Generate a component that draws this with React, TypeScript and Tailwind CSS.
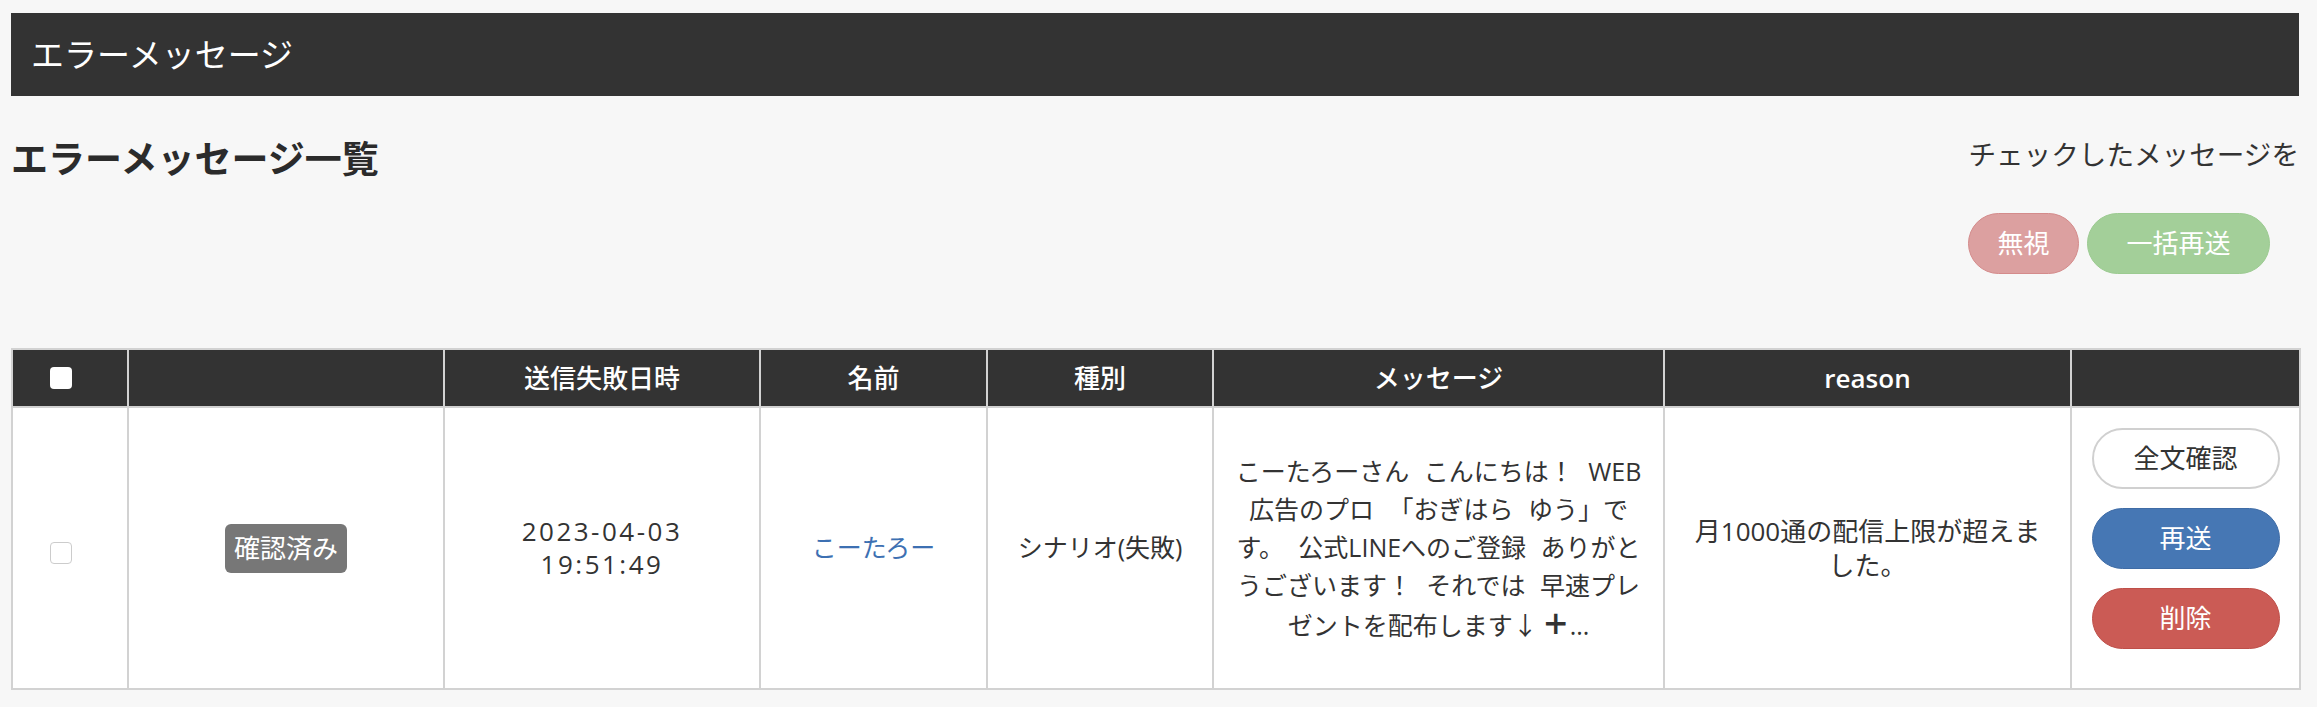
import React from "react";

export default function App() {
  return (
    <div className="min-h-screen bg-[#f7f7f7] pt-[13px] font-['Open_Sans','Noto_Sans_CJK_JP',sans-serif] text-[#333]">
      <div className="ml-[11px] w-[2288px]">
        <div className="flex h-[83px] items-center bg-[#333333] pl-[20px] text-[33px] leading-none text-white">
          エラーメッセージ
        </div>

        <div className="flex items-start justify-between pt-[39px]">
          <h1 className="mt-[2px] text-[37px] font-bold leading-[43px] text-[#2b2b2b]">
            エラーメッセージ一覧
          </h1>
          <div className="flex flex-col items-end">
            <p className="text-[27.6px] leading-[38px] text-[#333]">チェックしたメッセージを</p>
            <div className="mr-[29px] mt-[40px] flex gap-[8px]">
              <button className="flex h-[61px] w-[111px] items-center justify-center rounded-full border border-[#d48b8b] bg-[#dca0a0] text-[26px] text-white">
                無視
              </button>
              <button className="flex h-[61px] w-[183px] items-center justify-center rounded-full border border-[#9ccb91] bg-[#a3cf99] text-[26px] text-white">
                一括再送
              </button>
            </div>
          </div>
        </div>

        <table className="mt-[74px] w-[2288px] table-fixed border-collapse border-2 border-[#d2d2d2]">
          <thead>
            <tr className="h-[58px] bg-[#333333] text-white">
              <th className="w-[116px] border-2 border-[#d2d2d2] pl-[37px] text-left align-middle">
                <span className="block h-[22px] w-[22px] rounded-[4px] bg-white" />
              </th>
              <th className="w-[316px] border-2 border-[#d2d2d2]" />
              <th className="w-[316px] border-2 border-[#d2d2d2] text-[26px] font-medium">送信失敗日時</th>
              <th className="w-[227px] border-2 border-[#d2d2d2] text-[26px] font-medium">名前</th>
              <th className="w-[226px] border-2 border-[#d2d2d2] text-[26px] font-medium">種別</th>
              <th className="w-[451px] border-2 border-[#d2d2d2] text-[26px] font-medium">メッセージ</th>
              <th className="w-[407px] border-2 border-[#d2d2d2] text-[26px] font-semibold">reason</th>
              <th className="w-[229px] border-2 border-[#d2d2d2]" />
            </tr>
          </thead>
          <tbody>
            <tr className="h-[282px] bg-white">
              <td className="border-2 border-[#d2d2d2] pl-[37px] align-middle">
                <span className="mt-[9px] block h-[22px] w-[22px] rounded-[4px] border border-[#cccccc] bg-white" />
              </td>
              <td className="border-2 border-[#d2d2d2] text-center align-middle">
                <span className="inline-block rounded-[6px] bg-[#777777] px-[9px] py-[8px] text-[26px] leading-[33px] text-white">
                  確認済み
                </span>
              </td>
              <td className="border-2 border-[#d2d2d2] text-center align-middle text-[26px] leading-[33px] tracking-[2.5px]">
                <div>2023-04-03</div>
                <div>19:51:49</div>
              </td>
              <td className="border-2 border-[#d2d2d2] text-center align-middle text-[25px]">
                <a className="text-[#3d70b2]" href="#">
                  こーたろー
                </a>
              </td>
              <td className="border-2 border-[#d2d2d2] text-center align-middle text-[25px]">シナリオ(失敗)</td>
              <td className="whitespace-nowrap border-2 border-[#d2d2d2] text-center align-middle text-[25px] leading-[38px] [word-spacing:8px]">
                こーたろーさん こんにちは！ WEB
                <br />
                広告のプロ 「おぎはら ゆう」で
                <br />
                す。 公式LINEへのご登録 ありがと
                <br />
                うございます！ それでは 早速プレ
                <br />
                ゼントを配布します↓<span className="ml-[4px] font-['Noto_Sans_CJK_JP'] text-[28px] font-black">＋</span>...
              </td>
              <td className="border-2 border-[#d2d2d2] text-center align-middle text-[26px] leading-[34px]">
                月1000通の配信上限が超えま
                <br />
                した。
              </td>
              <td className="border-2 border-[#d2d2d2] align-middle">
                <div className="flex flex-col items-center">
                  <button className="mb-[19px] flex h-[61px] w-[188px] items-center justify-center rounded-full border-2 border-[#d0d0d0] bg-white text-[26px] text-[#333]">
                    全文確認
                  </button>
                  <button className="mb-[19px] flex h-[61px] w-[188px] items-center justify-center rounded-full border border-[#3f6ca6] bg-[#4677b4] text-[26px] text-white">
                    再送
                  </button>
                  <button className="mb-[19px] flex h-[61px] w-[188px] items-center justify-center rounded-full border border-[#be4f49] bg-[#cb5b55] text-[26px] text-white">
                    削除
                  </button>
                </div>
              </td>
            </tr>
          </tbody>
        </table>
      </div>
    </div>
  );
}
